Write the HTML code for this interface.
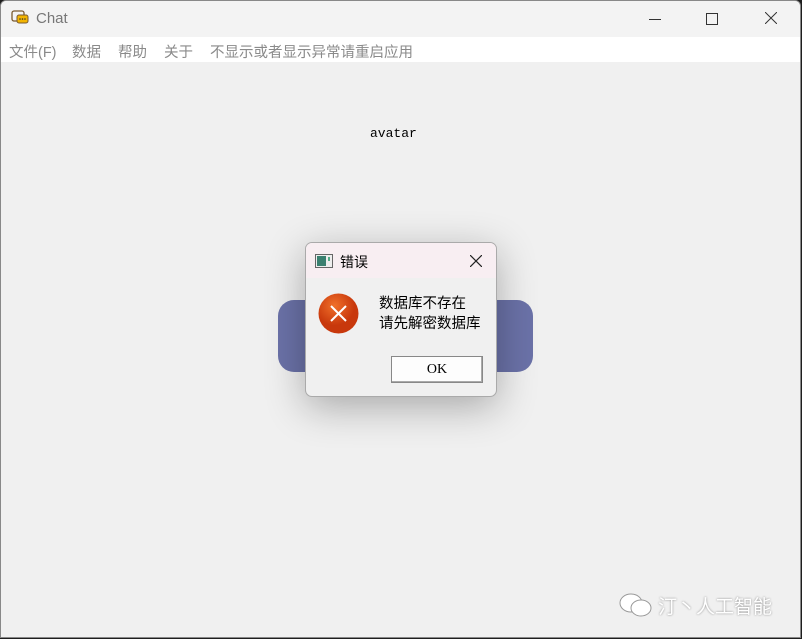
<!DOCTYPE html>
<html><head><meta charset="utf-8"><style>
body{margin:0;width:802px;height:639px;overflow:hidden;background:#1e1e1e;font-family:"Liberation Sans","Noto Sans CJK SC",sans-serif;}
.win{position:absolute;left:0;top:0;width:801px;height:638px;background:#f0f0f0;border:1px solid #888;box-sizing:border-box;border-radius:6px 6px 0 0;overflow:hidden}
.title{position:absolute;left:0;top:0;width:100%;height:36px;background:#f3f3f3}
.menu{position:absolute;left:0;top:36px;width:100%;height:25px;background:#fff;font-size:14.5px;color:#8a8a8a}
.menu span{position:absolute;top:4px}
.blue{position:absolute;left:277px;top:299px;width:255px;height:72px;background:#6b72a8;border-radius:16px}
.dlg{position:absolute;left:304px;top:241px;width:192px;height:155px;background:#f0f0f0;border:1px solid #aaa;box-sizing:border-box;border-radius:7px;box-shadow:0 10px 40px rgba(0,0,0,.3);overflow:hidden}
.dt{height:35px;background:#f8eef2}
.ok{position:absolute;left:85px;top:113px;width:92px;height:27px;border:1px solid #888;box-sizing:border-box;background:#fdfdfd;font-family:"Liberation Serif",serif;font-size:14px;text-align:center;line-height:25px;box-shadow:inset -1px -1px 0 #aaa}
</style></head><body>
<div class="win">
<div class="title">
<svg style="position:absolute;left:10px;top:9px" width="18" height="16"><rect x="1" y="1" width="12" height="10" rx="2" fill="none" stroke="#7a5a30" stroke-width="1.3"/><rect x="6" y="5" width="11" height="8" rx="2" fill="#f2b400" stroke="#7a5a30"/><circle cx="9" cy="9" r=".8" fill="#333"/><circle cx="11.5" cy="9" r=".8" fill="#333"/><circle cx="14" cy="9" r=".8" fill="#333"/></svg>
<span style="position:absolute;left:35px;top:9px;font-size:15px;color:#777">Chat</span>
<div style="position:absolute;left:648px;top:18px;width:12px;height:1px;background:#333"></div>
<div style="position:absolute;left:705px;top:12px;width:10px;height:10px;border:1px solid #333"></div>
<svg style="position:absolute;left:764px;top:11px" width="12" height="12"><path d="M0 0L12 12M12 0L0 12" stroke="#333"/></svg>
</div>
<div class="menu"><span style="left:8px">文件(F)</span><span style="left:71px">数据</span><span style="left:117px">帮助</span><span style="left:163px">关于</span><span style="left:209px">不显示或者显示异常请重启应用</span></div>
<div style="position:absolute;left:369px;top:125px;font-family:'Liberation Mono',monospace;font-size:13px">avatar</div>
<div class="blue"></div>
<div class="dlg"><div class="dt"></div>
<svg style="position:absolute;left:9px;top:11px" width="18" height="14"><rect x=".5" y=".5" width="17" height="13" fill="#eee" stroke="#666"/><rect x="2" y="2" width="9" height="10" fill="#3a8070"/><rect x="13" y="3" width="2" height="4" fill="#5a8"/></svg>
<span style="position:absolute;left:34px;top:9px;font-size:14px">错误</span>
<svg style="position:absolute;left:164px;top:12px" width="12" height="12"><path d="M0 0L12 12M12 0L0 12" stroke="#222" stroke-width="1.2"/></svg>
<svg style="position:absolute;left:12px;top:50px" width="41" height="41"><defs><radialGradient id="g" cx=".4" cy=".3"><stop offset="0" stop-color="#f0702a"/><stop offset="1" stop-color="#c8380c"/></radialGradient></defs><circle cx="20.5" cy="20.5" r="20" fill="url(#g)"/><path d="M13 13L28 28M28 13L13 28" stroke="#fff" stroke-width="2"/></svg>
<div style="position:absolute;left:73px;top:51px;font-size:14.5px;line-height:20px">数据库不存在<br>请先解密数据库</div>
<div class="ok">OK</div>
</div>
<div style="position:absolute;left:657px;top:591px;font-size:19px;color:#fff;text-shadow:0 0 2px #888">汀丶人工智能</div>
<svg style="position:absolute;left:617px;top:591px" width="36" height="26"><ellipse cx="13" cy="11" rx="11" ry="9" fill="#fff" stroke="#999"/><ellipse cx="23" cy="16" rx="10" ry="8" fill="#fff" stroke="#999"/></svg>
</div>
</body></html>
